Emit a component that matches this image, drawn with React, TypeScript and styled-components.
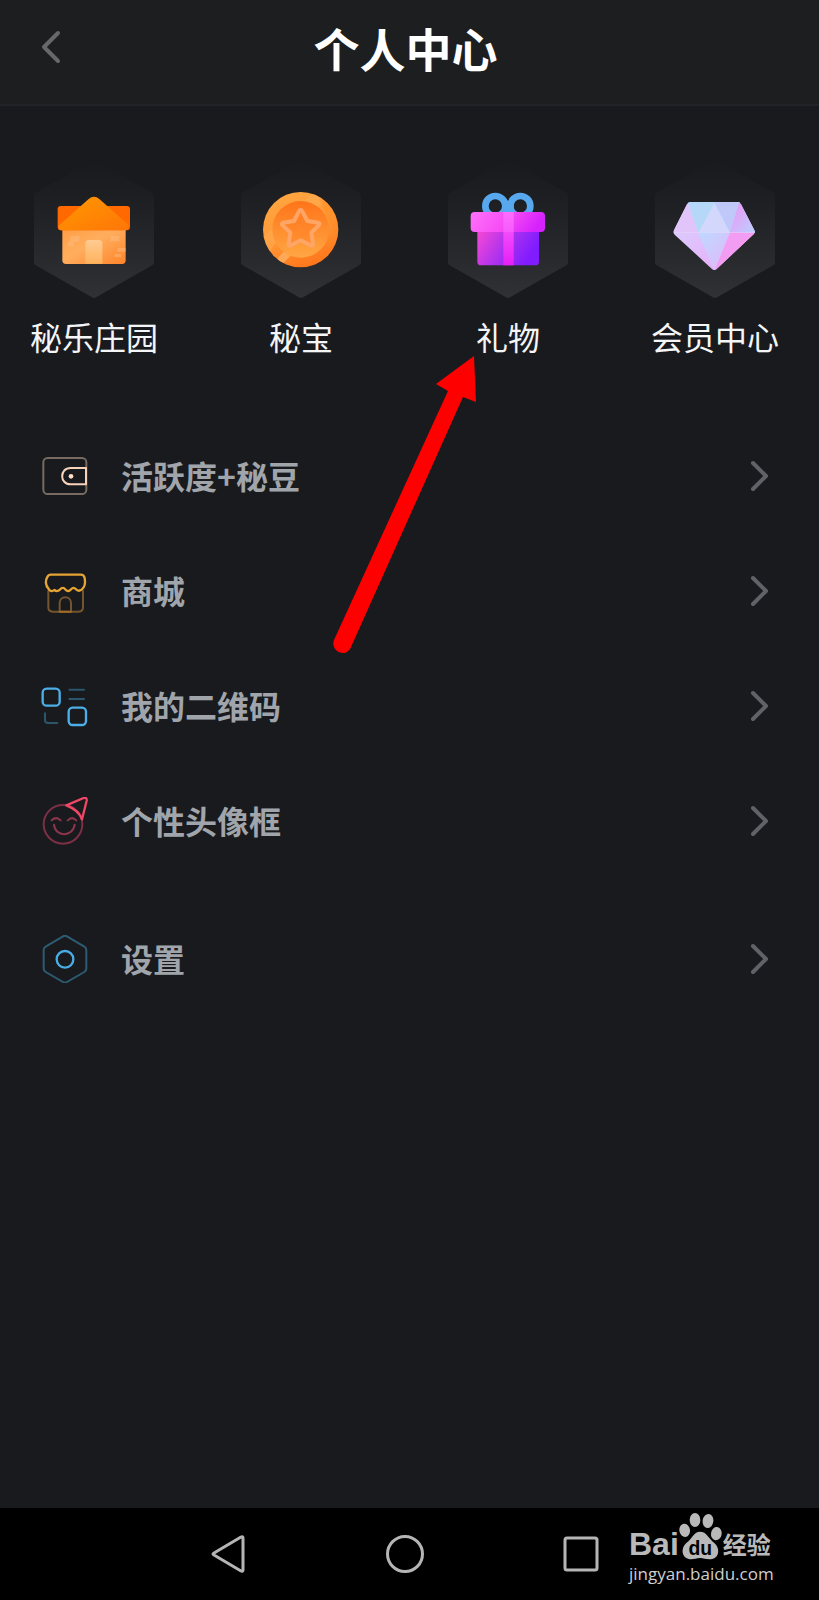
import React from 'react';
import styled, { createGlobalStyle } from 'styled-components';

const GlobalStyle = createGlobalStyle`
  * { box-sizing: border-box; }
  body {
    margin: 0;
    background: #191a1e;
    font-family: "Noto Sans CJK SC", sans-serif;
  }
`;

const Page = styled.div`
  min-height: 100vh;
  display: flex;
  flex-direction: column;
  background: #191a1e;
`;

const Header = styled.header`
  display: grid;
  grid-template-columns: 36px 1fr 36px;
  align-items: center;
  padding: 0 41px 10px 33px;
  height: 106px;
  background: #1d1e20;
  border-bottom: 2px solid #222328;
`;

const Title = styled.h1`
  margin: 0;
  text-align: center;
  color: #fff;
  font-size: 46px;
  line-height: 62px;
  font-weight: 700;
`;

const IconButton = styled.button`
  display: flex;
  align-items: center;
  justify-content: center;
  padding: 0;
  border: 0;
  background: none;
  cursor: pointer;
`;

const Main = styled.main`
  position: relative;
  flex: 1;
  padding-top: 54px;
`;

const Shortcuts = styled.nav`
  display: flex;
  justify-content: space-between;
  padding: 0 40px 0 30px;
`;

const Shortcut = styled.a`
  display: flex;
  flex-direction: column;
  align-items: center;
  gap: 14px;
  width: 128px;
  color: #f4f5f7;
  font-size: 32px;
  line-height: 48px;
  text-decoration: none;
  white-space: nowrap;
`;

const Menu = styled.ul`
  margin: 0;
  padding: 58px 0 0;
  list-style: none;
`;

const MenuItem = styled.li<{ $separate?: boolean }>`
  margin-top: ${(p) => (p.$separate ? '23px' : '0')};
`;

const MenuLink = styled.a`
  display: flex;
  align-items: center;
  gap: 32px;
  height: 115px;
  padding: 0 47px 0 41px;
  color: #a0a5ab;
  font-size: 32px;
  line-height: 48px;
  font-weight: 700;
  text-decoration: none;
`;

const MenuLabel = styled.span`
  flex: 1;
  padding-bottom: 2px;
`;

const Pointer = styled.svg`
  position: absolute;
  top: 250px;
  left: 333px;
  pointer-events: none;
`;

const NavBar = styled.footer`
  position: relative;
  display: flex;
  justify-content: center;
  gap: 132px;
  height: 92px;
  padding-right: 9px;
  background: #000;
`;

const NavButton = styled(IconButton)`
  width: 44px;
`;

const Watermark = styled.div`
  position: absolute;
  top: 4px;
  right: 45px;
  width: 145px;
  color: #b9b9b9;
`;

const Brand = styled.div`
  display: flex;
  align-items: flex-end;
  height: 48px;
`;

const BrandLatin = styled.span`
  font: 700 32px/32px "Liberation Sans", sans-serif;
`;

const BrandChinese = styled.span`
  font-size: 24px;
  line-height: 32px;
  font-weight: 700;
`;

const Site = styled.div`
  padding-top: 2px;
  color: #cfcfcf;
  font: 400 17px/24px "Open Sans", sans-serif;
`;

const Paw = () => (
  <svg width="44" height="48" viewBox="234 66 132 144" aria-hidden="true">
    <g fill="#b9b9b9">
      <ellipse cx="251" cy="121" rx="16" ry="20" transform="rotate(-8 251 121)" />
      <ellipse cx="282" cy="90" rx="16" ry="21" />
      <ellipse cx="321" cy="93" rx="16" ry="21" transform="rotate(8 321 93)" />
      <ellipse cx="346" cy="131" rx="16" ry="20" transform="rotate(8 346 131)" />
      <path d="M297 125C317 125 322 145 340 159C357 173 356 202 334 207C317 210 310 204 297 204C284 204 277 210 263 207C241 203 239 173 256 159C275 144 279 125 297 125Z" />
    </g>
    <text x="298" y="194" textAnchor="middle" fontFamily="Liberation Sans, sans-serif" fontWeight="700" fontSize="58" fill="#000">du</text>
  </svg>
);

const Tile = ({ id, x, children }: { id: string; x: number; children: React.ReactNode }) => (
  <svg width="120" height="138" viewBox="0 0 360 414" aria-hidden="true">
    <defs>
      <linearGradient id={`${id}-hex`} x1="0" y1="0" x2="0" y2="1">
        <stop offset="0" stopColor="#191a1e" />
        <stop offset=".25" stopColor="#1d1e21" />
        <stop offset="1" stopColor="#303134" />
      </linearGradient>
    </defs>
    <path d="M180 0L356 99Q360 102 360 106V307Q360 312 356 315L186 412Q180 416 174 412L4 315Q0 312 0 307V106Q0 102 4 99Z" fill={`url(#${id}-hex)`} />
    <g transform={`translate(${-x} 0)`}>{children}</g>
  </svg>
);

const HouseTile = () => (
  <Tile id="house" x={44}>
    <defs>
      <linearGradient id="house-wall" x1="0" y1="0" x2="1" y2="1">
        <stop offset="0" stopColor="#ff9c42" />
        <stop offset=".45" stopColor="#ffae5e" />
        <stop offset="1" stopColor="#ff842b" />
      </linearGradient>
      <linearGradient id="house-roof" x1="0" y1="0" x2="1" y2="1">
        <stop offset="0" stopColor="#ff9800" />
        <stop offset="1" stopColor="#ff7608" />
      </linearGradient>
      <linearGradient id="house-door" x1="0" y1="0" x2="0" y2="1">
        <stop offset="0" stopColor="#ffcb91" />
        <stop offset="1" stopColor="#ffb35d" />
      </linearGradient>
    </defs>
    <path d="M129 200H319V301Q319 312 308 312H140Q129 312 129 301Z" fill="url(#house-wall)" />
    <rect x="115" y="138" width="217" height="73" rx="10" fill="#ff6900" />
    <path d="M118 197L208 117Q224 104 240 117L328 195Q328 211 319 211H128Q117 211 118 197Z" fill="url(#house-roof)" />
    <path d="M198 311V251Q198 240 209 240H239Q249 240 249 251V311Z" fill="url(#house-door)" />
    <g fill="#ffc38a" opacity=".4">
      <rect x="153" y="227" width="27" height="18" rx="2" />
      <rect x="146" y="245" width="17" height="14" />
      <rect x="274" y="227" width="26" height="17" rx="2" />
      <rect x="294" y="264" width="25" height="11" />
      <rect x="286" y="282" width="20" height="9" />
    </g>
  </Tile>
);

const CoinTile = () => (
  <Tile id="coin" x={65}>
    <defs>
      <linearGradient id="coin-rim" x1=".2" y1="0" x2=".6" y2="1">
        <stop offset="0" stopColor="#ffa640" />
        <stop offset=".5" stopColor="#ff9b38" />
        <stop offset="1" stopColor="#ff761b" />
      </linearGradient>
      <linearGradient id="coin-face" x1="0" y1="0" x2="0" y2="1">
        <stop offset="0" stopColor="#ff7419" />
        <stop offset="1" stopColor="#ffa743" />
      </linearGradient>
      <clipPath id="coin-clip"><circle cx="244" cy="209" r="113" /></clipPath>
    </defs>
    <circle cx="244" cy="209" r="113" fill="url(#coin-rim)" />
    <g clipPath="url(#coin-clip)">
      <path d="M130 231L285 96L325 117L163 256L149 282Z" fill="#ffb25a" opacity=".45" />
      <path d="M171 300L205 260L226 274L184 318Z" fill="#ffb66a" opacity=".7" />
      <path d="M299 118L313 105L370 170L350 225Z" fill="#ff861d" opacity=".4" />
    </g>
    <circle cx="244" cy="208" r="85" fill="url(#coin-face)" />
    <path d="M244 150Q247 150 249 154L264 183L296 188Q304 190 298 196L276 218L281 250Q282 260 274 256L244 241L215 256Q207 260 208 251L213 218L190 196Q184 190 192 188L224 183L239 154Q241 150 244 150Z" fill="#ff7a22" fillOpacity=".35" stroke="#ffa565" strokeWidth="12" strokeLinejoin="round" />
  </Tile>
);

const GiftTile = () => (
  <Tile id="gift" x={87}>
    <defs>
      <linearGradient id="gift-box" x1="0" y1="0" x2="1" y2=".35">
        <stop offset="0" stopColor="#fb49d4" />
        <stop offset=".5" stopColor="#b234ec" />
        <stop offset="1" stopColor="#801cff" />
      </linearGradient>
      <linearGradient id="gift-lid" x1="0" y1="0" x2="1" y2=".2">
        <stop offset="0" stopColor="#ff72fa" />
        <stop offset=".55" stopColor="#f64cf5" />
        <stop offset="1" stopColor="#d622fc" />
      </linearGradient>
      <linearGradient id="gift-ribbon" x1="0" y1="0" x2="0" y2="1">
        <stop offset="0" stopColor="#fc65ff" />
        <stop offset="1" stopColor="#e520f5" />
      </linearGradient>
    </defs>
    <g fill="none" stroke="#58a8ef" strokeWidth="20">
      <circle cx="229" cy="138" r="30" />
      <circle cx="304" cy="138" r="30" />
    </g>
    <path d="M249 135Q266 109 284 135V160H249Z" fill="#58a8ef" />
    <path d="M175 205H360V305Q360 316 349 316H186Q175 316 175 305Z" fill="url(#gift-box)" />
    <rect x="155" y="156" width="223" height="60" rx="12" fill="url(#gift-lid)" />
    <rect x="253" y="156" width="31" height="160" fill="url(#gift-ribbon)" />
    <path d="M253 156H284V216H253Z" fill="#ff88ff" opacity=".25" />
  </Tile>
);

const DiamondTile = () => (
  <Tile id="diamond" x={107}>
    <defs>
      <linearGradient id="diamond-left" x1="0" y1="0" x2="1" y2="1">
        <stop offset="0" stopColor="#d6d7ff" />
        <stop offset="1" stopColor="#eda3f8" />
      </linearGradient>
      <linearGradient id="diamond-mid" x1="0" y1="0" x2="1" y2="1">
        <stop offset="0" stopColor="#bcdaff" />
        <stop offset="1" stopColor="#e5b5fa" />
      </linearGradient>
      <linearGradient id="diamond-right" x1="0" y1="0" x2="1" y2="1">
        <stop offset="0" stopColor="#f48ff3" />
        <stop offset="1" stopColor="#b8d1ff" />
      </linearGradient>
      <clipPath id="diamond-clip">
        <path d="M214 126H354Q361 126 365 133L405 210Q409 217 403 223L293 326Q285 334 277 326L166 224Q160 218 164 210L203 133Q207 126 214 126Z" />
      </clipPath>
    </defs>
    <g clipPath="url(#diamond-clip)">
      <path d="M160 120H410V335H160Z" fill="url(#diamond-left)" />
      <path d="M203 120H365L332 218H237Z" fill="#b5d8f8" />
      <path d="M285 126L365 120L332 218Z" fill="#bfc8f9" />
      <path d="M203 126L237 218H160Z" fill="#e1c5fa" />
      <path d="M285 130L332 218H237Z" fill="#d4d7fc" />
      <path d="M362 120L410 218H332Z" fill="url(#diamond-right)" />
      <path d="M237 218H332L285 334Z" fill="url(#diamond-mid)" />
      <path d="M332 218H410L285 334Z" fill="#f29cf2" />
      <path d="M160 218H410" stroke="#e7dcff" strokeWidth="2" opacity=".7" />
    </g>
  </Tile>
);

const LineIcon = ({ y, children }: { y: number; children: React.ReactNode }) => (
  <svg width="48" height="48" viewBox={`62 ${y} 144 144`} fill="none" strokeWidth="6" strokeLinecap="round" strokeLinejoin="round" aria-hidden="true">
    {children}
  </svg>
);

const WalletIcon = () => (
  <LineIcon y={36}>
    <rect x="69" y="54" width="129" height="108" rx="13" stroke="#776b61" />
    <path d="M197 84H151C117 84 117 133 151 133H197Z" stroke="#f6d3ba" />
    <circle cx="152" cy="109" r="7" fill="#ffe0c7" />
  </LineIcon>
);

const ShopIcon = () => (
  <LineIcon y={381}>
    <path d="M84 453V502Q84 515 97 515H175Q188 515 188 502V453M118 515V489C118 466 152 466 152 489V515Z" stroke="#75552d" />
    <path d="M118 515H152" stroke="#a06d24" />
    <path d="M91 404H181Q191 404 193 414C196 430 194 441 184 449Q174 456 166 447Q160 440 153 447Q144 458 136 449Q127 438 119 449Q110 457 102 450Q93 458 85 447C74 435 75 420 81 411Q84 404 91 404Z" stroke="#e5a434" strokeWidth="7" />
  </LineIcon>
);

const QrIcon = () => (
  <LineIcon y={36}>
    <g stroke="#4cafe8" strokeWidth="7">
      <rect x="67" y="56" width="51" height="51" rx="12" />
      <rect x="145" y="113" width="52" height="52" rx="12" />
    </g>
    <path d="M147 59H191M147 87H191M74 130V150Q74 159 83 159H111" stroke="#2b566b" />
  </LineIcon>
);

const FaceIcon = () => (
  <LineIcon y={381}>
    <circle cx="128" cy="463" r="58" stroke="#7d3045" />
    <path d="M94 451Q108 438 121 451M142 451Q155 438 168 451M101 464C104 502 158 502 163 464" stroke="#8c354c" />
    <path d="M138 406L190 384Q200 381 199 392L185 448Q176 421 138 406Z" stroke="#ef4866" strokeWidth="7" />
  </LineIcon>
);

const SettingsIcon = () => (
  <LineIcon y={75}>
    <path d="M128 79Q134 75 140 79L192 110Q198 113 198 120V176Q198 182 192 186L140 216Q134 220 128 216L76 186Q70 182 70 176V120Q70 113 76 110Z" stroke="#2d5c72" />
    <circle cx="134" cy="148" r="25" stroke="#49ade5" strokeWidth="7" />
  </LineIcon>
);

const Chevron = () => (
  <svg width="24" height="36" viewBox="0 0 24 36" fill="none" stroke="#5f6367" strokeWidth="4" strokeLinecap="round" strokeLinejoin="round" aria-hidden="true">
    <path d="M5 5L18 18L5 31" />
  </svg>
);

const shortcuts = [
  { label: '秘乐庄园', Icon: HouseTile },
  { label: '秘宝', Icon: CoinTile },
  { label: '礼物', Icon: GiftTile },
  { label: '会员中心', Icon: DiamondTile },
];

const menu = [
  { label: '活跃度+秘豆', Icon: WalletIcon },
  { label: '商城', Icon: ShopIcon },
  { label: '我的二维码', Icon: QrIcon },
  { label: '个性头像框', Icon: FaceIcon },
  { label: '设置', Icon: SettingsIcon, separate: true },
];

export default function App() {
  return (
    <>
      <GlobalStyle />
      <Page>
        <Header>
          <IconButton type="button" aria-label="返回">
            <svg width="36" height="40" viewBox="0 0 36 40" fill="none" stroke="#66686b" strokeWidth="4" strokeLinecap="round" strokeLinejoin="round" aria-hidden="true">
              <path d="M25 6L11 20L25 34" />
            </svg>
          </IconButton>
          <Title>个人中心</Title>
        </Header>
        <Main>
          <Shortcuts>
            {shortcuts.map(({ label, Icon }) => (
              <Shortcut key={label} href="#">
                <Icon />
                <span>{label}</span>
              </Shortcut>
            ))}
          </Shortcuts>
          <Menu>
            {menu.map(({ label, Icon, separate }) => (
              <MenuItem key={label} $separate={separate}>
                <MenuLink href="#">
                  <Icon />
                  <MenuLabel>{label}</MenuLabel>
                  <Chevron />
                </MenuLink>
              </MenuItem>
            ))}
          </Menu>
          <Pointer width="144" height="297" viewBox="0 0 144 297" aria-hidden="true">
            <path d="M141 0L103 28L115 35L1 284C-3 295 13 303 18 291L130 41L143 46Z" fill="#f00" />
          </Pointer>
        </Main>
        <NavBar>
          <NavButton type="button" aria-label="后退">
            <svg width="44" height="44" viewBox="0 0 44 44" fill="none" stroke="#b5b5b5" strokeWidth="3" strokeLinejoin="round">
              <path d="M7 21L34 5Q36 4 36 6V38Q36 40 34 39L7 23Q5 22 7 21Z" />
            </svg>
          </NavButton>
          <NavButton type="button" aria-label="主页">
            <svg width="44" height="44" viewBox="0 0 44 44" fill="none" stroke="#b5b5b5" strokeWidth="3">
              <circle cx="22" cy="22" r="17.5" />
            </svg>
          </NavButton>
          <NavButton type="button" aria-label="最近任务">
            <svg width="44" height="44" viewBox="0 0 44 44" fill="none" stroke="#b5b5b5" strokeWidth="3">
              <rect x="6" y="6" width="32" height="32" rx="2" />
            </svg>
          </NavButton>
          <Watermark>
            <Brand>
              <BrandLatin>Bai</BrandLatin>
              <Paw />
              <BrandChinese>经验</BrandChinese>
            </Brand>
            <Site>jingyan.baidu.com</Site>
          </Watermark>
        </NavBar>
      </Page>
    </>
  );
}
